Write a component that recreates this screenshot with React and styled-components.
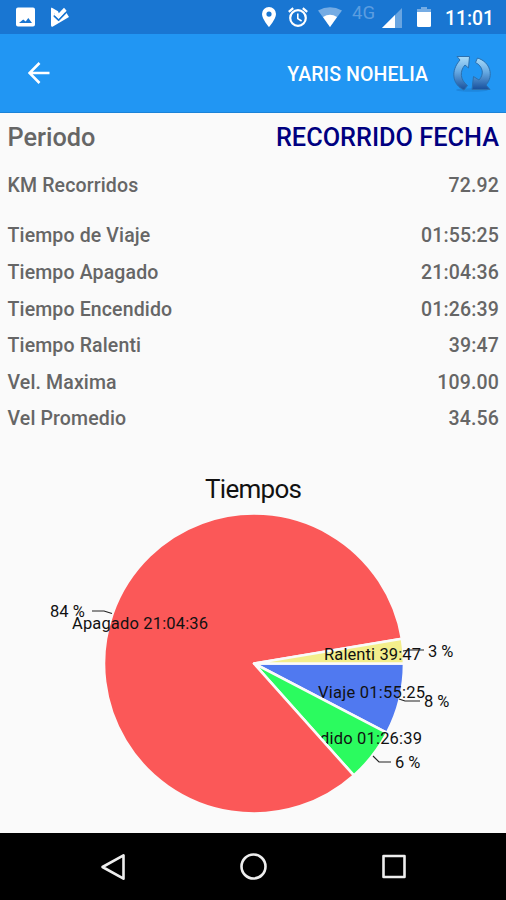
import React from 'react';
import styled, { createGlobalStyle } from 'styled-components';

const rows = [
    { label: 'KM Recorridos', value: '72.92', gap: 14 },
    { label: 'Tiempo de Viaje', value: '01:55:25' },
    { label: 'Tiempo Apagado', value: '21:04:36' },
    { label: 'Tiempo Encendido', value: '01:26:39' },
    { label: 'Tiempo Ralenti', value: '39:47' },
    { label: 'Vel. Maxima', value: '109.00' },
    { label: 'Vel Promedio', value: '34.56' },
]

// seconds, clockwise from three o'clock
const slices = [
    { name: 'Viaje', time: '01:55:25', seconds: 6925, color: '#5079f0', x: 318, y: 698, width: 107, percent: '8 %', px: 424, py: 707, line: 'M399 699 L405 701 H420' },
    { name: 'Encendido', time: '01:26:39', seconds: 5199, color: '#2bfb5f', x: 274, y: 744, width: 148, percent: '6 %', px: 395, py: 767.5, line: 'M373 756 L379 762 H391' },
    { name: 'Apagado', time: '21:04:36', seconds: 75876, color: '#fb5858', x: 72, y: 629, width: 136, percent: '84 %', px: 50, py: 616.5, line: 'M92 611 H104 L112 613.5' },
    { name: 'Ralenti', time: '39:47', seconds: 2387, color: '#f3ee8c', x: 324, y: 659.5, width: 97, percent: '3 %', px: 428, py: 656.5, line: 'M403 651 L409 650 H424' },
]

const CX = 254;
const CY = 663.5;
const R = 150;

const point = (angle) => `${CX + R * Math.cos(angle)} ${CY + R * Math.sin(angle)}`;

const withPaths = (items) => {
    const total = items.reduce((sum, item) => sum + item.seconds, 0);
    let start = 0;
    return items.map((item) => {
        const end = start + (item.seconds / total) * Math.PI * 2;
        const large = end - start > Math.PI ? 1 : 0;
        const d = `M${CX} ${CY} L${point(start)} A${R} ${R} 0 ${large} 1 ${point(end)} Z`;
        start = end;
        return { ...item, d };
    });
}

const PieChart = () => (
    <Chart viewBox="0 440 506 393">
        <ChartTitle x="205" y="498" textLength="97">Tiempos</ChartTitle>
        {withPaths(slices).map((slice) => (
            <g key={slice.name}>
                <path d={slice.d} fill={slice.color} stroke="#fafafa" strokeWidth="2.6" strokeLinejoin="round" />
                <ChartLabel x={slice.x} y={slice.y} textLength={slice.width}>{slice.name} {slice.time}</ChartLabel>
                <path d={slice.line} fill="none" stroke="#222" strokeWidth="1.1" />
                <ChartLabel x={slice.px} y={slice.py}>{slice.percent}</ChartLabel>
            </g>
        ))}
    </Chart>
)

const StatusIcons = () => (
    <>
        <Icon $w={19} $left={16} viewBox="0 0 19 20">
            <path fill="#fff" fillRule="evenodd" d="M2 .5h15q2 0 2 2v15q0 2-2 2H2q-2 0-2-2v-15q0-2 2-2zM3 16h13l-3.700-5-2.600 3.500-2.500-2z" />
        </Icon>
        <Icon $w={19} $left={15} viewBox="0 0 19 20">
            <path fill="#fff" d="M1.5.6 8 4.2 8.8 6.3 14 .8l1.6 1.8-7 7.4L4.4 6.4 3.6 9l5 5L16.5 6 19 10 2.5 19.8Q1 20 1 18.2V1.5Z" />
            <path fill="none" stroke="#fff" strokeWidth="2.2" d="m4.5 7 4 4.2L15.8 3" />
            <path fill="none" stroke="#1976d2" strokeWidth="1.6" d="m4 8.8 4.6 4.4L15.5 6" />
        </Icon>
    </>
)

const SystemIcons = () => (
    <>
        <Icon $w={14} viewBox="0 0 14 20">
            <path fill="#fff" fillRule="evenodd" d="M7 0a7 7 0 0 1 7 7c0 5-7 13-7 13S0 12 0 7a7 7 0 0 1 7-7Zm0 4.5a2.6 2.6 0 1 0 0 5.2 2.6 2.6 0 0 0 0-5.2Z" />
        </Icon>
        <Icon $w={20} $left={12} viewBox="0 0 20 20">
            <g fill="none" stroke="#fff" strokeWidth="2.2">
                <circle cx="10" cy="11" r="7.8" />
                <path d="M.8 4.8 5.2 1.1M19.2 4.8 14.8 1.1" />
                <path d="M9.8 6.4v5.2l3.8 2.4" strokeWidth="1.6" />
            </g>
        </Icon>
        <Icon $w={24} $left={10} viewBox="0 0 24 20">
            <path fill="#fff" opacity=".4" d="M0 3.5Q12-3 24 3.5L12 20Z" />
            <path fill="#fff" d="M5 10Q12 5.500 19 10L12 20Z" />
        </Icon>
        <Network>4G</Network>
        <Icon $w={20} $left={6} viewBox="0 0 20 20">
            <path fill="#fff" opacity=".35" d="M20 1V21H0Z" />
            <path fill="#fff" d="M13 8V21H0Z" />
        </Icon>
        <Icon $w={14} $left={15} viewBox="0 0 14 20">
            <path fill="#fff" opacity=".4" d="M4 0h6v2H14v3H0V2h4Z" />
            <path fill="#fff" d="M0 5h14v13.500q0 1.500-1.500 1.500h-11Q0 20 0 18.500Z" />
        </Icon>
    </>
)

const RefreshIcon = () => (
    <svg width="40" height="40" viewBox="0 0 40 40">
        <defs>
            <linearGradient id="arrow" x1="0" y1="0" x2="0" y2="1">
                <stop offset="0" stopColor="#a9dcfa" />
                <stop offset=".45" stopColor="#66a9e2" />
                <stop offset="1" stopColor="#174f9c" />
            </linearGradient>
        </defs>
        <ellipse cx="20" cy="36" rx="16" ry="1.8" fill="#1a70bd" opacity=".4" />
        <g fill="url(#arrow)" stroke="#2c70ae" strokeWidth="1" strokeLinejoin="round">
            <path d="M5 2.500H17.500L16.500 14 13 11C7.500 17 8 26 15.500 31.500L12 36C0 30.500-1.500 16.500 8 6Z" />
            <path d="M25.500 4C38.500 8 42 22 34 31L38 35.500H20L21.500 22.500 27 26C32.500 20 31 12.500 23.500 8.500Z" />
        </g>
    </svg>
)

const App = () => {
    return (
        <Screen>
            <GlobalStyle />
            <StatusBar>
                <StatusGroup><StatusIcons /></StatusGroup>
                <StatusGroup>
                    <SystemIcons />
                    <Clock>11:01</Clock>
                </StatusGroup>
            </StatusBar>
            <Toolbar>
                <svg width="22" height="22" viewBox="0 0 22 22">
                    <path d="M21.500 11H2M11.500 1 1.500 11l10 10" fill="none" stroke="#fff" strokeWidth="2.600" />
                </svg>
                <Vehicle>
                    <span>YARIS NOHELIA</span>
                    <RefreshIcon />
                </Vehicle>
            </Toolbar>
            <Report>
                <Heading>
                    <span>Periodo</span>
                    <Period>RECORRIDO FECHA</Period>
                </Heading>
                {rows.map((row) => (
                    <Row key={row.label} $gap={row.gap}>
                        <span>{row.label}</span>
                        <span>{row.value}</span>
                    </Row>
                ))}
            </Report>
            <PieChart />
            <NavBar>
                <svg width="26" height="28" viewBox="0 0 26 28">
                    <path d="M23.500 2.300v23.400L2.500 14Z" />
                </svg>
                <svg width="28" height="28" viewBox="0 0 28 28">
                    <circle cx="13.500" cy="13.500" r="12" />
                </svg>
                <svg width="26" height="28" viewBox="0 0 26 28">
                    <rect x="2.500" y="3" width="21" height="21" />
                </svg>
            </NavBar>
        </Screen>
    )
}

export default App;

const GlobalStyle = createGlobalStyle`
    * {
        box-sizing: border-box;
    }

    body {
        margin: 0;
        background: #fafafa;
        font-family: Roboto, 'Liberation Sans', sans-serif;
    }

    svg {
        display: block;
        flex-shrink: 0;
    }
`

const Screen = styled.div`
    display: flex;
    flex-direction: column;
    width: 506px;
    height: 900px;
    overflow: hidden;
    background: #fafafa;
`

const StatusBar = styled.div`
    display: flex;
    justify-content: space-between;
    height: 34px;
    padding-right: 12px;
    background: #1976d2;
`

const StatusGroup = styled.div`
    display: flex;
    align-items: flex-start;
    padding-top: 7px;
`

const Icon = styled.svg`
    width: ${({ $w }) => $w}px;
    height: 20px;
    margin-left: ${({ $left }) => $left || 0}px;
    overflow: visible;
`

const Network = styled.span`
    width: 24px;
    margin: -4px 0 0 10px;
    color: #5b9de0;
    font-size: 18.500px;
    line-height: 20px;
`

const Clock = styled.span`
    width: 49px;
    margin-left: 14px;
    color: #fff;
    font-size: 19.300px;
    font-weight: 500;
    line-height: 23px;
    white-space: nowrap;
`

const Toolbar = styled.div`
    display: flex;
    align-items: center;
    justify-content: space-between;
    height: 79px;
    padding: 0 14px 0 28px;
    border-bottom: 1px solid #1b83d8;
    background: #2196f3;
`

const Vehicle = styled.div`
    display: flex;
    align-items: center;
    gap: 24px;
    padding-top: 2px;
    color: #fff;
    font-size: 19.500px;
    font-weight: 500;
    letter-spacing: .1px;
`

const Report = styled.div`
    height: 327px;
    padding: 0 7px 0 7.500px;
    color: #666;
`

const Heading = styled.div`
    display: flex;
    align-items: center;
    justify-content: space-between;
    height: 49px;
    margin-bottom: 5px;
    font-size: 25.300px;
    font-weight: 500;
`

const Period = styled.span`
    color: #000080;
`

const Row = styled.div`
    display: flex;
    align-items: center;
    justify-content: space-between;
    height: 36.600px;
    margin-bottom: ${({ $gap }) => $gap || 0}px;
    font-size: 19.500px;
    font-weight: 500;
    letter-spacing: .14px;
`

const Chart = styled.svg`
    width: 506px;
    height: 393px;
`

const ChartTitle = styled.text`
    fill: #111;
    font-size: 26px;
`

const ChartLabel = styled.text`
    fill: #111;
    font-size: 16.500px;
`

const NavBar = styled.div`
    display: flex;
    align-items: center;
    justify-content: space-between;
    height: 67px;
    padding: 0 99px 0 100px;
    background: #000;

    svg {
        fill: none;
        stroke: #eee;
        stroke-width: 2.600;
        stroke-linejoin: round;
    }
`
